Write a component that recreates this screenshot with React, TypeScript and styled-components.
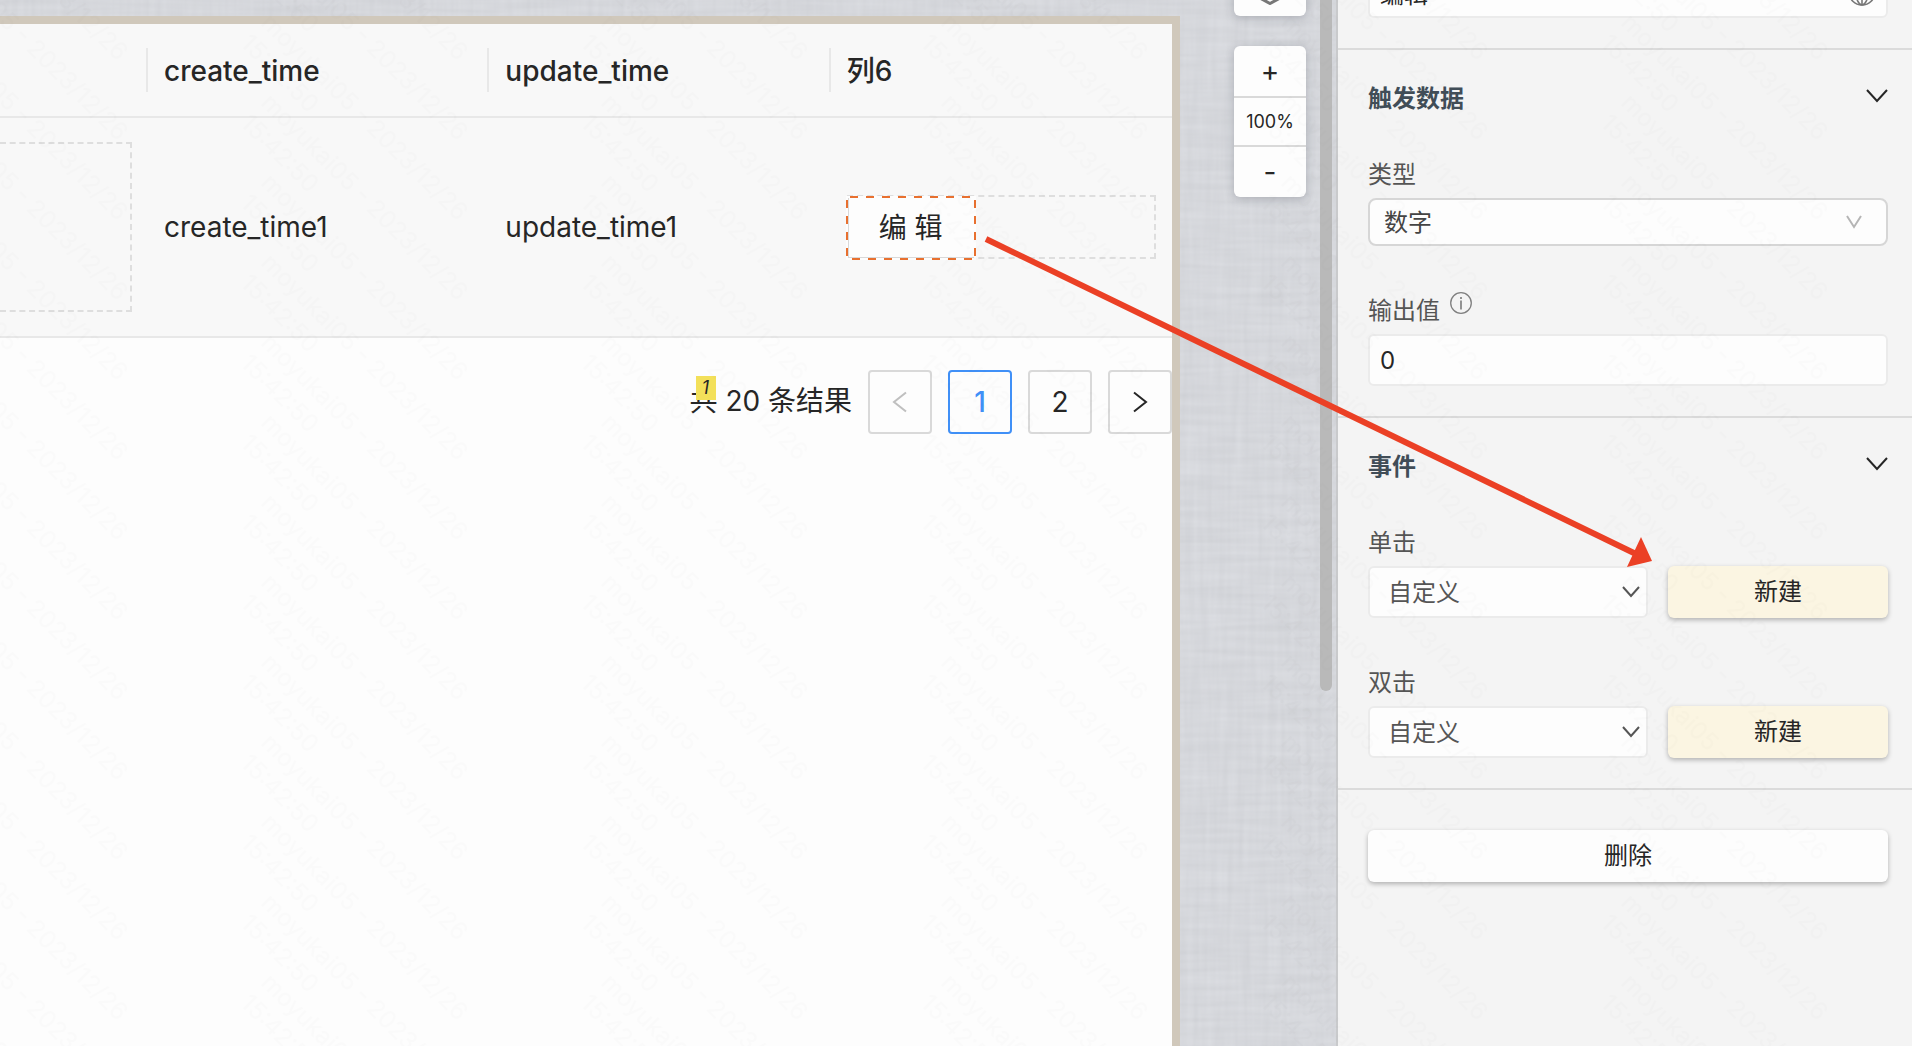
import React from "react";
import styled, { createGlobalStyle, css } from "styled-components";

const GlobalStyle = createGlobalStyle`
  *, *::before, *::after { box-sizing: border-box; }
  body {
    margin: 0;
    overflow: hidden;
    background: #f4f4f4;
    color: #262626;
    font-family: Inter, "Noto Sans CJK SC", sans-serif;
  }
  button, input, select { font: inherit; color: inherit; margin: 0; }
`;

const Page = styled.div`
  position: relative;
  display: grid;
  grid-template-columns: minmax(0, 1fr) 576px;
  height: 100vh;
  overflow: hidden;
`;

/* ---------- Stage ---------- */

const Stage = styled.main`
  position: relative;
  display: flex;
  overflow: hidden;
  background: #d5d7db;
`;

const Linen = styled.svg`
  position: absolute;
  inset: 0;
  width: 100%;
  height: 100%;
`;

const Frame = styled.section`
  position: relative;
  flex: 1;
  min-width: 0;
  margin-top: 16px;
  border: 8px solid #d0c8bb;
  border-width: 8px 8px 0 0;
  background: #fdfdfd;
`;

const DataTable = styled.table`
  width: 100%;
  table-layout: fixed;
  border-collapse: separate;
  border-spacing: 0;
  background: #f8f8f8;
  font-size: 28px;
  line-height: 44px;
`;

const LeadCol = styled.col`
  width: 148px;
`;

const HeadCell = styled.th`
  height: 94px;
  padding: 2px 16px 0;
  border-bottom: 2px solid #e8e8e8;
  text-align: left;
  font-weight: 500;
  background: linear-gradient(#e8e8e8, #e8e8e8) right center / 2px 44px no-repeat;
  &:last-child { background: none; }
`;

const BodyCell = styled.td`
  height: 220px;
  padding: 0 16px;
  border-bottom: 2px solid #e8e8e8;
  &:first-child { padding-left: 0; }
`;

const Slot = styled.div<{ $tall?: boolean }>`
  display: flex;
  height: ${(p) => (p.$tall ? 170 : 64)}px;
  border: 2px dashed #dedede;
  ${(p) => p.$tall && css`border-left: 0;`}
`;

const dash = "#fdfdfd 0 4px, #e8702f 4px 12px, #fdfdfd 12px 16px";

/* Selected element: the dashes are drawn over the button's own hairline border. */
const EditButton = styled.button`
  width: 130px;
  height: 64px;
  margin: -1px 0 0 -3px;
  padding: 0;
  border: 0;
  font-size: 28px;
  background:
    repeating-linear-gradient(90deg, ${dash}) left top / 100% 2px no-repeat,
    repeating-linear-gradient(270deg, ${dash}) left bottom / 100% 2px no-repeat,
    repeating-linear-gradient(180deg, ${dash}) left top / 2px 100% no-repeat,
    repeating-linear-gradient(180deg, ${dash}) right top / 2px 100% no-repeat,
    linear-gradient(#d9d9d9, #d9d9d9) 2px 2px / 1px 60px no-repeat,
    linear-gradient(#d9d9d9, #d9d9d9) 2px 61px / 126px 1px no-repeat,
    #fdfdfd;
`;

const Pager = styled.nav`
  display: flex;
  justify-content: flex-end;
  align-items: center;
  gap: 16px;
  margin-top: 32px;
  font-size: 28px;
`;

const Total = styled.span`
  position: relative;
  padding-bottom: 2px;
  line-height: 44px;
`;

const Mark = styled.span`
  position: absolute;
  top: -3px;
  left: 6px;
  width: 20px;
  height: 24px;
  background: #f3e05a;
  color: #262626;
  font-size: 18px;
  font-style: italic;
  line-height: 24px;
  text-align: center;
`;

const PageButton = styled.button<{ $active?: boolean }>`
  display: flex;
  align-items: center;
  justify-content: center;
  width: 64px;
  height: 64px;
  padding: 0;
  border: 2px solid ${(p) => (p.$active ? "#4090f7" : "#d9d9d9")};
  border-radius: 4px;
  background: #fdfdfd;
  color: ${(p) => (p.$active ? "#4090f7" : "#262626")};
  font-weight: ${(p) => (p.$active ? 500 : 400)};
  &:disabled { color: #bfbfbf; }
`;

const Tools = styled.aside`
  position: relative;
  display: flex;
  flex-direction: column;
  gap: 30px;
  width: 156px;
  padding-left: 54px;
`;

const ToolCard = styled.div<{ $scrolled?: boolean }>`
  width: 72px;
  border-radius: 6px;
  background: #fdfdfd;
  box-shadow: 0 2px 10px rgba(60, 64, 80, 0.28);
  ${(p) => p.$scrolled && css`margin-top: -34px;`}
`;

const ToolButton = styled.button`
  display: flex;
  align-items: center;
  justify-content: center;
  width: 100%;
  height: 50px;
  padding: 0;
  border: 0;
  background: none;
  font-size: 28px;
`;

const ZoomValue = styled.output`
  display: block;
  height: 51px;
  border: solid #d9d9d9;
  border-width: 2px 0;
  font-size: 18px;
  line-height: 48px;
  text-align: center;
`;

const ScrollThumb = styled.div`
  position: absolute;
  top: -10px;
  right: 4px;
  width: 12px;
  height: 701px;
  border-radius: 6px;
  background: #b9b9b9;
`;

/* ---------- Panel ---------- */

const Panel = styled.aside`
  border-left: 2px solid #c9cacc;
  background: #f4f4f4;
  overflow: hidden;
  font-size: 24px;
`;

const PanelContent = styled.div`
  display: flex;
  flex-direction: column;
  margin-top: -64px;
`;

const Section = styled.section<{ $last?: boolean }>`
  padding: ${(p) => (p.$last ? 40 : 30)}px 24px 30px 30px;
  border-bottom: ${(p) => (p.$last ? 0 : 2)}px solid #dbdbdb;
`;

const SectionHead = styled.header`
  display: flex;
  justify-content: space-between;
  margin-bottom: 38px;
`;

const Title = styled.h2`
  margin: 0;
  color: #414d57;
  font-size: 24px;
  font-weight: 700;
  line-height: 38px;
`;

const FoldButton = styled.button`
  display: flex;
  align-items: center;
  height: 32px;
  padding: 0;
  border: 0;
  background: none;
  color: #262626;
`;

const Field = styled.div`
  & + & { margin-top: 46px; }
`;

const LabelRow = styled.div`
  display: flex;
  gap: 10px;
  height: 38px;
  margin-bottom: 4px;
  color: #555;
`;

const Label = styled.label`
  line-height: 38px;
`;

const ControlRow = styled.div`
  display: flex;
  gap: 20px;
`;

const Control = styled.div`
  position: relative;
  flex: 1;
  min-width: 0;
`;

const TextBox = styled.input`
  display: block;
  width: 100%;
  height: 52px;
  padding: 0 10px;
  border: 2px solid #ebebeb;
  border-radius: 6px;
  background: #fdfdfd;
`;

const Select = styled.select<{ $strong?: boolean }>`
  display: block;
  appearance: none;
  width: 100%;
  height: ${(p) => (p.$strong ? 48 : 52)}px;
  padding: 0 ${(p) => (p.$strong ? 14 : 18)}px;
  border: 2px solid ${(p) => (p.$strong ? "#d6d6d6" : "#ebebeb")};
  border-radius: ${(p) => (p.$strong ? 8 : 6)}px;
  background: #fdfdfd;
  color: ${(p) => (p.$strong ? "#444" : "#555")};
`;

const Adornment = styled.span<{ $right: number; $color: string }>`
  position: absolute;
  top: 0;
  bottom: 0;
  right: ${(p) => p.$right}px;
  display: flex;
  align-items: center;
  color: ${(p) => p.$color};
  pointer-events: none;
`;

const ActionButton = styled.button<{ $kind: "create" | "remove" }>`
  width: ${(p) => (p.$kind === "create" ? "220px" : "100%")};
  height: 52px;
  padding: 0;
  border: 0;
  border-radius: 6px;
  background: ${(p) => (p.$kind === "create" ? "#fbf5e2" : "#fdfdfd")};
  box-shadow: 0 2px 5px rgba(0, 0, 0, 0.28);
  line-height: 50px;
`;

/* ---------- Overlays ---------- */

const Overlay = styled.svg`
  position: absolute;
  inset: 0;
  width: 100%;
  height: 100%;
  pointer-events: none;
`;

const Chevron = ({ w, h }: { w: number; h: number }) => (
  <svg width={w} height={h} viewBox={`0 0 ${w} ${h}`} fill="none" stroke="currentColor" strokeWidth="2" aria-hidden="true">
    <path d={`M1 1 L${w / 2} ${h - 2} L${w - 1} 1`} />
  </svg>
);

const Angle = ({ flip }: { flip?: boolean }) => (
  <svg width="16" height="22" viewBox="0 0 16 22" fill="none" stroke="currentColor" strokeWidth="2" aria-hidden="true">
    <path d={flip ? "M2 1.5 L14 11 L2 20.5" : "M14 1.5 L2 11 L14 20.5"} />
  </svg>
);

const InfoIcon = () => (
  <svg width="22" height="22" viewBox="0 0 22 22" fill="none" stroke="#808080" strokeWidth="1.3" aria-hidden="true">
    <circle cx="11" cy="11" r="10.3" />
    <path d="M11 8.5V17.5M11 5V7" strokeWidth="1.7" />
  </svg>
);

const CubeIcon = () => (
  <svg width="28" height="28" viewBox="0 0 28 28" fill="none" stroke="#777" strokeWidth="3" aria-hidden="true">
    <path d="M14 2 L26 8 V20 L14 26.5 L2 20 V8 Z M2 8 L14 14 L26 8" />
    <path d="M11.5 14 V23 M16.5 14 V23" strokeWidth="2" />
  </svg>
);

const GlobeIcon = () => (
  <svg width="28" height="28" viewBox="0 0 28 28" fill="none" stroke="currentColor" strokeWidth="1.6" aria-hidden="true">
    <circle cx="14" cy="14" r="13" />
    <ellipse cx="14" cy="14" rx="6" ry="13" />
    <path d="M14 1V27M1 14H27M3 7H25M3 21H25" />
  </svg>
);

const LinenTexture = () => (
  <Linen aria-hidden="true">
    <filter id="warp" x="0" y="0" width="100%" height="100%" colorInterpolationFilters="sRGB">
      <feTurbulence type="fractalNoise" baseFrequency="0.16 0.012" numOctaves="2" seed="4" />
      <feColorMatrix values="0.08 0 0 0 0.798  0.08 0 0 0 0.805  0.08 0 0 0 0.823  0 0 0 0 1" />
    </filter>
    <filter id="weft" x="0" y="0" width="100%" height="100%" colorInterpolationFilters="sRGB">
      <feTurbulence type="fractalNoise" baseFrequency="0.012 0.16" numOctaves="2" seed="9" />
      <feColorMatrix values="0.08 0 0 0 0.798  0.08 0 0 0 0.805  0.08 0 0 0 0.823  0 0 0 0 1" />
    </filter>
    <rect width="100%" height="100%" filter="url(#warp)" />
    <rect width="100%" height="100%" filter="url(#weft)" opacity="0.5" />
  </Linen>
);

const Watermark = () => (
  <Overlay aria-hidden="true">
    <pattern id="stamp" x="240" y="0" width="340" height="80" patternUnits="userSpaceOnUse">
      {[-240, -160, -80, 0, 80].map((y) => (
        <g key={y} transform={`translate(20 ${y + 24}) rotate(45)`} fill="#000" fillOpacity="0.012" fontSize="24">
          <text>moyukai05 - 2023/12/26</text>
          <text y="29">15:42:50</text>
        </g>
      ))}
    </pattern>
    <rect width="100%" height="100%" fill="url(#stamp)" />
  </Overlay>
);

const Arrow = () => (
  <Overlay aria-hidden="true">
    <path d="M986 239 L1636 554" stroke="#eb4025" strokeWidth="6" />
    <path d="M1652 561 L1641 537 L1627 567 Z" fill="#eb4025" />
  </Overlay>
);

const FoldableHead = ({ title }: { title: string }) => (
  <SectionHead>
    <Title>{title}</Title>
    <FoldButton type="button" aria-label={`收起${title}`}>
      <Chevron w={22} h={14} />
    </FoldButton>
  </SectionHead>
);

const EventField = ({ id, label }: { id: string; label: string }) => (
  <Field>
    <LabelRow>
      <Label htmlFor={id}>{label}</Label>
    </LabelRow>
    <ControlRow>
      <Control>
        <Select id={id}>
          <option>自定义</option>
        </Select>
        <Adornment $right={8} $color="#555">
          <Chevron w={18} h={12} />
        </Adornment>
      </Control>
      <ActionButton type="button" $kind="create">新建</ActionButton>
    </ControlRow>
  </Field>
);

export default function App() {
  return (
    <>
      <GlobalStyle />
      <Page>
        <Stage>
          <LinenTexture />
          <Frame>
            <DataTable>
              <colgroup>
                <LeadCol />
                <col />
                <col />
                <col />
              </colgroup>
              <thead>
                <tr>
                  <HeadCell />
                  <HeadCell>create_time</HeadCell>
                  <HeadCell>update_time</HeadCell>
                  <HeadCell>列6</HeadCell>
                </tr>
              </thead>
              <tbody>
                <tr>
                  <BodyCell><Slot $tall /></BodyCell>
                  <BodyCell>create_time1</BodyCell>
                  <BodyCell>update_time1</BodyCell>
                  <BodyCell>
                    <Slot>
                      <EditButton type="button">编 辑</EditButton>
                    </Slot>
                  </BodyCell>
                </tr>
              </tbody>
            </DataTable>
            <Pager aria-label="分页">
              <Total>
                共 20 条结果
                <Mark>1</Mark>
              </Total>
              <PageButton type="button" disabled aria-label="上一页"><Angle /></PageButton>
              <PageButton type="button" $active aria-current="page">1</PageButton>
              <PageButton type="button">2</PageButton>
              <PageButton type="button" aria-label="下一页"><Angle flip /></PageButton>
            </Pager>
          </Frame>
          <Tools>
            <ToolCard $scrolled>
              <ToolButton type="button" aria-label="组件"><CubeIcon /></ToolButton>
            </ToolCard>
            <ToolCard>
              <ToolButton type="button">+</ToolButton>
              <ZoomValue>100%</ZoomValue>
              <ToolButton type="button">-</ToolButton>
            </ToolCard>
          </Tools>
          <ScrollThumb />
        </Stage>
        <Panel>
          <PanelContent>
            <Section>
              <Control>
                <TextBox aria-label="文本" defaultValue="编辑" />
                <Adornment $right={12} $color="#777"><GlobeIcon /></Adornment>
              </Control>
            </Section>
            <Section>
              <FoldableHead title="触发数据" />
              <Field>
                <LabelRow><Label htmlFor="type">类型</Label></LabelRow>
                <Control>
                  <Select id="type" $strong>
                    <option>数字</option>
                  </Select>
                  <Adornment $right={26} $color="#b5b5b5"><Chevron w={16} h={14} /></Adornment>
                </Control>
              </Field>
              <Field>
                <LabelRow>
                  <Label htmlFor="value">输出值</Label>
                  <InfoIcon />
                </LabelRow>
                <TextBox id="value" defaultValue="0" />
              </Field>
            </Section>
            <Section>
              <FoldableHead title="事件" />
              <EventField id="click" label="单击" />
              <EventField id="dblclick" label="双击" />
            </Section>
            <Section $last>
              <ActionButton type="button" $kind="remove">删除</ActionButton>
            </Section>
          </PanelContent>
        </Panel>
        <Watermark />
        <Arrow />
      </Page>
    </>
  );
}
